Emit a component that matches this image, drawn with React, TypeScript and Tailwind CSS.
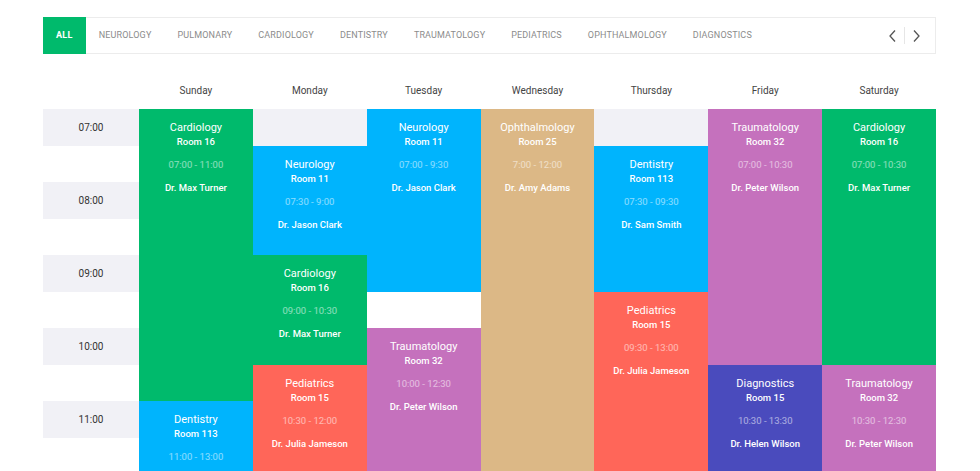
import React from "react";

type Ev = {
  title: string;
  room: string;
  time: string;
  doc: string;
  cls: string;
};

const tabs = [
  "NEUROLOGY",
  "PULMONARY",
  "CARDIOLOGY",
  "DENTISTRY",
  "TRAUMATOLOGY",
  "PEDIATRICS",
  "OPHTHALMOLOGY",
  "DIAGNOSTICS",
];

const days = ["Sunday", "Monday", "Tuesday", "Wednesday", "Thursday", "Friday", "Saturday"];
const dayCols = ["col-start-2", "col-start-3", "col-start-4", "col-start-5", "col-start-6", "col-start-7", "col-start-8"];

const GREEN = "bg-[#00ba6c]";
const BLUE = "bg-[#00b4fd]";
const TAN = "bg-[#dcb886]";
const PURPLE = "bg-[#c571bd]";
const CORAL = "bg-[#ff6659]";
const INDIGO = "bg-[#4a4bbd]";

const events: Ev[] = [
  { title: "Cardiology", room: "Room 16", time: "07:00 - 11:00", doc: "Dr. Max Turner", cls: `${GREEN} col-start-2 row-start-2 row-span-8` },
  { title: "Dentistry", room: "Room 113", time: "11:00 - 13:00", doc: "Dr. Sam Smith", cls: `${BLUE} col-start-2 row-start-10 row-span-4` },
  { title: "Neurology", room: "Room 11", time: "07:30 - 9:00", doc: "Dr. Jason Clark", cls: `${BLUE} col-start-3 row-start-3 row-span-3` },
  { title: "Cardiology", room: "Room 16", time: "09:00 - 10:30", doc: "Dr. Max Turner", cls: `${GREEN} col-start-3 row-start-6 row-span-3` },
  { title: "Pediatrics", room: "Room 15", time: "10:30 - 12:00", doc: "Dr. Julia Jameson", cls: `${CORAL} col-start-3 row-start-9 row-span-3` },
  { title: "Neurology", room: "Room 11", time: "07:00 - 9:30", doc: "Dr. Jason Clark", cls: `${BLUE} col-start-4 row-start-2 row-span-5` },
  { title: "Traumatology", room: "Room 32", time: "10:00 - 12:30", doc: "Dr. Peter Wilson", cls: `${PURPLE} col-start-4 row-start-8 row-span-5` },
  { title: "Ophthalmology", room: "Room 25", time: "7:00 - 12:00", doc: "Dr. Amy Adams", cls: `${TAN} col-start-5 row-start-2 row-span-10` },
  { title: "Dentistry", room: "Room 113", time: "07:30 - 09:30", doc: "Dr. Sam Smith", cls: `${BLUE} col-start-6 row-start-3 row-span-4` },
  { title: "Pediatrics", room: "Room 15", time: "09:30 - 13:00", doc: "Dr. Julia Jameson", cls: `${CORAL} col-start-6 row-start-7 row-span-7` },
  { title: "Traumatology", room: "Room 32", time: "07:00 - 10:30", doc: "Dr. Peter Wilson", cls: `${PURPLE} col-start-7 row-start-2 row-span-7` },
  { title: "Diagnostics", room: "Room 15", time: "10:30 - 13:30", doc: "Dr. Helen Wilson", cls: `${INDIGO} col-start-7 row-start-9 row-span-6` },
  { title: "Cardiology", room: "Room 16", time: "07:00 - 10:30", doc: "Dr. Max Turner", cls: `${GREEN} col-start-8 row-start-2 row-span-7` },
  { title: "Traumatology", room: "Room 32", time: "10:30 - 12:30", doc: "Dr. Peter Wilson", cls: `${PURPLE} col-start-8 row-start-9 row-span-4` },
];

const bands = [
  { label: "07:00", cls: "row-start-2" },
  { label: "08:00", cls: "row-start-4" },
  { label: "09:00", cls: "row-start-6" },
  { label: "10:00", cls: "row-start-8" },
  { label: "11:00", cls: "row-start-10" },
];

export default function App() {
  return (
    <div
      className="w-[980px] h-[471px] overflow-hidden bg-white"
      style={{ fontFamily: "Roboto, 'Liberation Sans', sans-serif" }}
    >
      <div className="ml-[43px] w-[893px] pt-[17px]">
        {/* Tabs */}
        <div className="flex items-stretch h-[37px] border border-[#ececec]">
          <div className="bg-[#00ba6c] text-white text-[9px] font-bold tracking-[0.3px] flex items-center px-[13px] -ml-px -my-px">
            ALL
          </div>
          {tabs.map((t) => (
            <div
              key={t}
              className="flex items-center px-[13px] text-[9px] tracking-[0.15px] text-[#8c8c8c]"
            >
              {t}
            </div>
          ))}
          <div className="ml-auto flex items-center pr-[14px]">
            <svg width="10" height="14" viewBox="0 0 10 14" className="text-[#555]">
              <path d="M7 1.5 L2 7 L7 12.5" fill="none" stroke="currentColor" strokeWidth="1.3" />
            </svg>
            <div className="w-px h-[17px] bg-[#e6e6e6] mx-[6px]" />
            <svg width="10" height="14" viewBox="0 0 10 14" className="text-[#555]">
              <path d="M3 1.5 L8 7 L3 12.5" fill="none" stroke="currentColor" strokeWidth="1.3" />
            </svg>
          </div>
        </div>

        {/* Schedule grid */}
        <div className="mt-[18px] grid grid-cols-[96px_repeat(7,1fr)] grid-rows-[37px_repeat(14,36.5px)]">
          {days.map((d, i) => (
            <div
              key={d}
              className={`row-start-1 flex items-center justify-center text-[10px] text-[#444] ${dayCols[i]}`}
            >
              {d}
            </div>
          ))}
          {bands.map((b) => (
            <div key={b.label} className={`col-start-1 col-span-8 ${b.cls} bg-[#f1f1f6]`} />
          ))}
          {bands.map((b) => (
            <div
              key={b.label + "l"}
              className={`col-start-1 ${b.cls} flex items-center justify-center text-[10px] text-[#333] z-10`}
            >
              {b.label}
            </div>
          ))}
          {events.map((e, i) => (
            <div
              key={i}
              className={`${e.cls} z-10 flex flex-col items-center text-white pt-[12px]`}
            >
              <div className="text-[11px] leading-[14px]">{e.title}</div>
              <div className="text-[9.5px] leading-[14px] font-medium">{e.room}</div>
              <div className="text-[9.5px] leading-[14px] mt-[9px] text-white/55">{e.time}</div>
              <div className="text-[9.5px] leading-[14px] mt-[9px] font-medium">{e.doc}</div>
            </div>
          ))}
        </div>
      </div>
    </div>
  );
}
